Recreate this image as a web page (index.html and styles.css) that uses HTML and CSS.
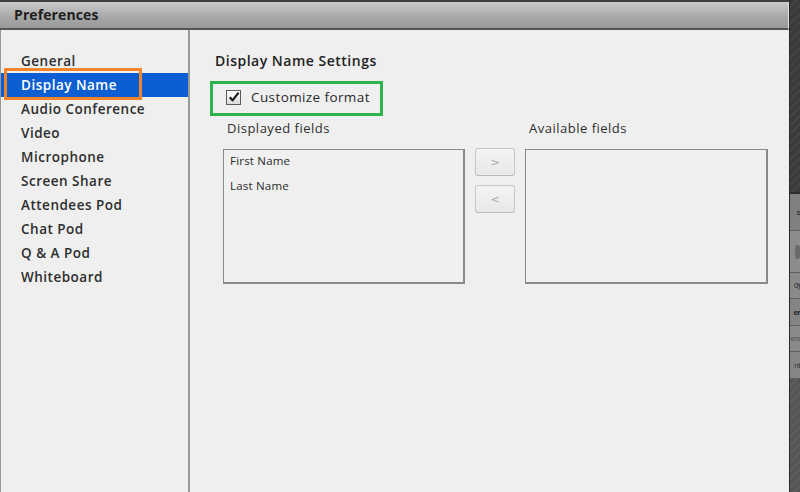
FILE: index.html
```html
<!DOCTYPE html>
<html>
<head>
<meta charset="utf-8">
<link rel="stylesheet" href="styles.css">
</head>
<body>
<div class="screen">
  <div class="dialog">
    <div class="titlebar">Preferences</div>
    <div class="body">
      <nav class="sidebar">
        <div class="item">General</div>
        <div class="item selected">Display Name</div>
        <div class="item">Audio Conference</div>
        <div class="item">Video</div>
        <div class="item">Microphone</div>
        <div class="item">Screen Share</div>
        <div class="item">Attendees Pod</div>
        <div class="item">Chat Pod</div>
        <div class="item">Q &amp; A Pod</div>
        <div class="item">Whiteboard</div>
        <div class="mark-orange"></div>
      </nav>
      <main class="content">
        <h1 class="heading">Display Name Settings</h1>
        <label class="check-row">
          <span class="checkbox">
            <svg width="12" height="12" viewBox="0 0 12 12"><path d="M1.8 6.2 L4.6 9.4 L10.6 1.6" fill="none" stroke="#1a1a1a" stroke-width="2.2" stroke-linejoin="round"/></svg>
          </span>
          <span>Customize format</span>
        </label>
        <div class="fields">
          <div class="label">Displayed fields</div>
          <div></div>
          <div class="label">Available fields</div>
          <div class="listbox">
            <div class="entry">First Name</div>
            <div class="entry">Last Name</div>
          </div>
          <div class="buttons">
            <button class="btn">&gt;</button>
            <button class="btn">&lt;</button>
          </div>
          <div class="listbox"></div>
        </div>
        <div class="mark-green"></div>
      </main>
    </div>
  </div>
  <div class="backapp">
    <div class="bg-top"></div>
    <div class="panel">
      <div class="prow r1">s</div>
      <div class="prow r2"><span class="blob"></span></div>
      <div class="prow r3">0)</div>
      <div class="prow r4">er</div>
      <div class="prow r5">ers</div>
      <div class="prow r6">nt</div>
    </div>
    <div class="bg-bottom"></div>
  </div>
</div>
</body>
</html>
```

FILE: styles.css
```css
html, body {
  margin: 0;
  padding: 0;
}
body {
  width: 800px;
  height: 492px;
  overflow: hidden;
  background: #3a3a3a;
  font-family: "Open Sans", "DejaVu Sans", sans-serif;
  color: #2e2e2e;
}
.screen {
  display: flex;
  height: 492px;
}
.dialog {
  width: 789px;
  flex: none;
  display: flex;
  flex-direction: column;
  padding-top: 2px;
  background: #3e3e3e;
}
.titlebar {
  box-sizing: border-box;
  height: 28px;
  line-height: 26px;
  padding-left: 14px;
  font-size: 14px;
  font-weight: 700;
  letter-spacing: 0.1px;
  color: #1e1e1e;
  background: linear-gradient(#cbcbcb, #a6a6a6 60%, #999);
  border-bottom: 2px solid #555;
  border-right: 1px solid #e0e0e0;
}
.body {
  flex: 1;
  display: flex;
  background: #efefef;
}
.sidebar {
  position: relative;
  width: 187px;
  flex: none;
  border-left: 1px solid #9a9a9a;
  border-right: 2px solid #999;
  padding-top: 19px;
  background: #efefef;
}
.item {
  height: 24px;
  line-height: 24px;
  padding-left: 20px;
  font-size: 13.5px;
  font-weight: 600;
  letter-spacing: 0.5px;
  color: #2e2e2e;
}
.item.selected {
  background: #0b5fd2;
  color: #fff;
}
.mark-orange {
  position: absolute;
  left: 3px;
  top: 38px;
  width: 132px;
  height: 26px;
  border: 3px solid #f4842a;
}
.content {
  position: relative;
  flex: 1;
  padding-left: 25px;
  padding-top: 19px;
}
.heading {
  margin: 0;
  height: 24px;
  line-height: 24px;
  font-size: 14px;
  font-weight: 600;
  letter-spacing: 0.5px;
  color: #1e1e1e;
}
.check-row {
  display: flex;
  align-items: center;
  gap: 10px;
  margin-top: 12px;
  margin-left: 11px;
  height: 24px;
  font-size: 13.5px;
  letter-spacing: 0.4px;
  color: #2a2a2a;
}
.checkbox {
  width: 13px;
  height: 13px;
  border: 1px solid #5a5a5a;
  background: linear-gradient(#fdfdfd, #dcdcdc);
  display: flex;
  align-items: center;
  justify-content: center;
}
.mark-green {
  position: absolute;
  left: 20px;
  top: 51px;
  width: 167px;
  height: 29px;
  border: 3px solid #2db34c;
}
.fields {
  display: grid;
  grid-template-columns: 242px 40px 243px;
  grid-template-rows: 33px 135px;
  column-gap: 10px;
  margin-left: 8px;
  margin-top: 7px;
}
.label {
  font-size: 13px;
  letter-spacing: 0.5px;
  line-height: 24px;
  padding-left: 4px;
  color: #2e2e2e;
}
.listbox {
  box-sizing: border-box;
  border: 2px solid #8a8a8a;
  border-top-width: 1px;
  border-left-width: 1px;
  background: #f0f0f0;
  padding-top: 0;
}
.entry {
  height: 25px;
  line-height: 21px;
  padding-left: 6px;
  font-size: 11.5px;
  letter-spacing: 0.2px;
  color: #2a2a2a;
}
.buttons {
  display: flex;
  flex-direction: column;
  gap: 9px;
  margin-top: -1px;
}
.btn {
  width: 40px;
  height: 28px;
  padding: 0;
  border: 1px solid #c6c6c6;
  border-bottom-color: #b8b8b8;
  border-radius: 3px;
  background: linear-gradient(#f4f4f4, #e8e8e8);
  color: #a8a8a8;
  font-family: "DejaVu Sans", sans-serif;
  font-size: 11px;
}
.backapp {
  flex: 1;
  min-width: 0;
  display: flex;
  flex-direction: column;
  background: repeating-linear-gradient(135deg, #3a3a3a 0 4px, #444 4px 6px);
  border-left: 1px solid #2a2a2a;
}
.bg-top {
  height: 192px;
}
.panel {
  display: flex;
  flex-direction: column;
  background: #7d7d7d;
  border-top: 2px solid #2e2e2e;
}
.prow {
  display: flex;
  justify-content: flex-end;
  align-items: center;
  white-space: nowrap;
  font-family: "Liberation Sans Narrow", "Liberation Sans", sans-serif;
  font-size: 8px;
  letter-spacing: -0.5px;
  color: #222;
  border-bottom: 1px solid #5e5e5e;
}
.r1 { height: 36px; background: #808080; }
.r2 { height: 41px; background: #8c8c8c; }
.r3 { height: 25px; background: #8a8a8a; }
.r4 { height: 26px; background: #858585; font-weight: 700; font-style: italic; }
.r5 { height: 25px; background: #8a8a8a; color: #555; }
.r6 { height: 26px; background: #858585; color: #333; }
.blob {
  width: 5px;
  height: 14px;
  background: #6a6a6a;
  border-radius: 3px;
}
.bg-bottom {
  flex: 1;
  background: repeating-linear-gradient(135deg, #555 0 4px, #5e5e5e 4px 6px);
}
```
